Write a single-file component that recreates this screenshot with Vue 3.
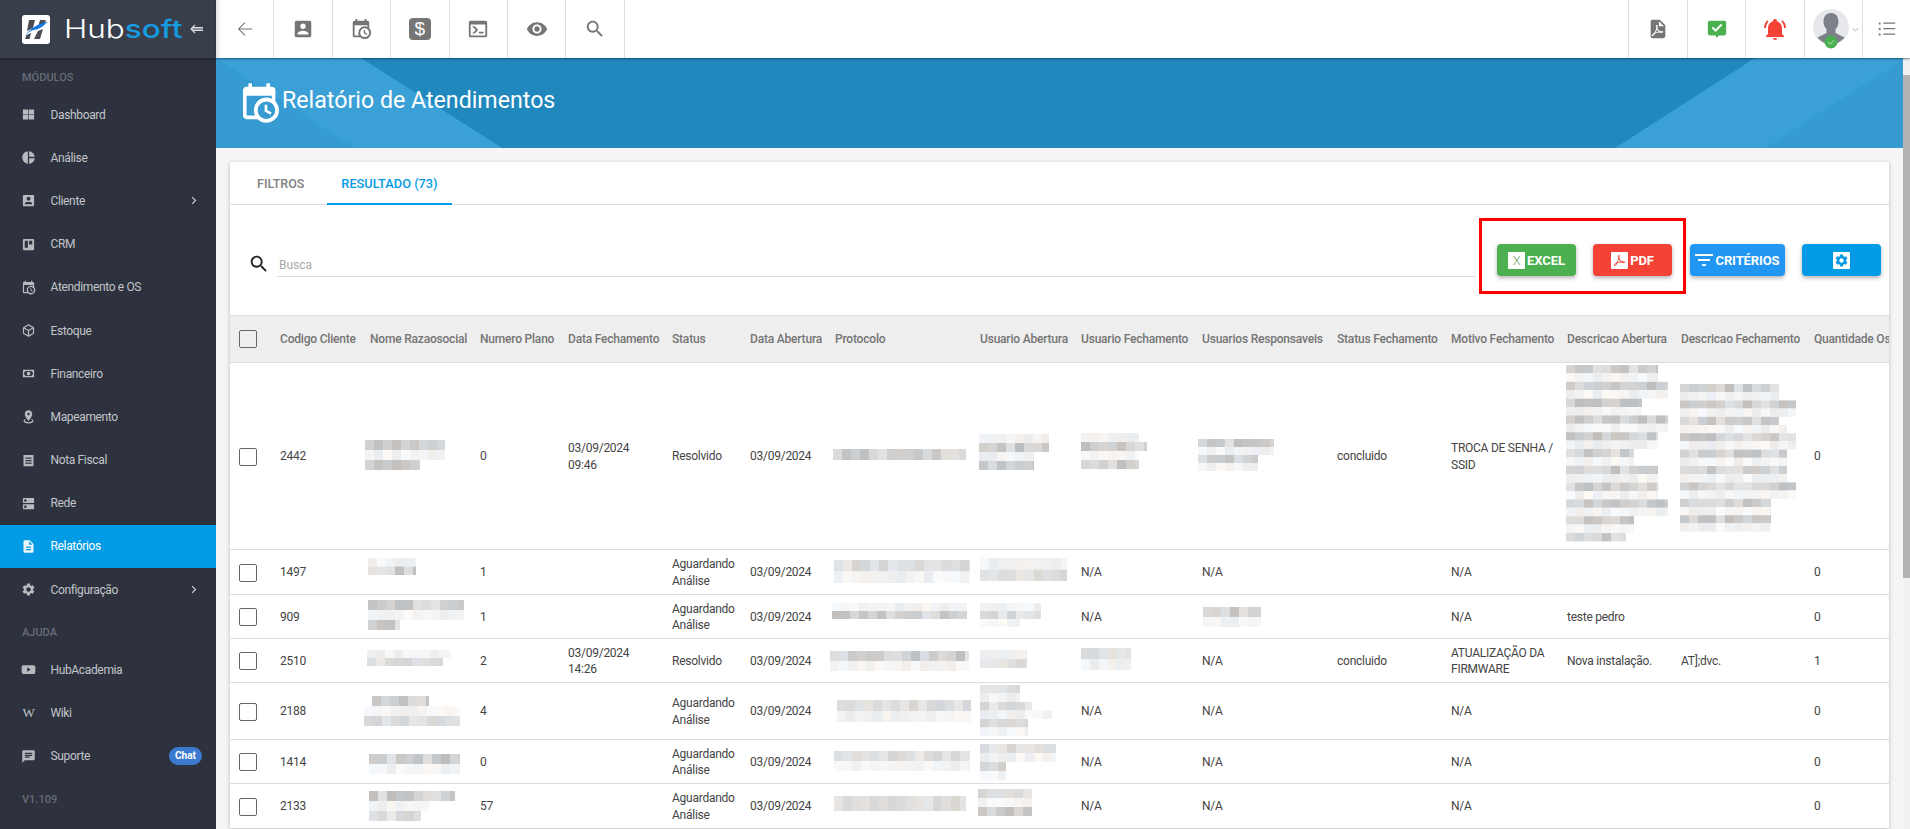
<script setup>
import { computed } from 'vue'

const icons = {
  quilt: 'M3 4h8.5v7.5H3zM12.5 4H21v7.5h-8.5zM3 12.5h8.5V20H3zM12.5 12.5H21V20h-8.5z',
  pie: 'M11 2v20c-5.07-.5-9-4.79-9-10s3.93-9.5 9-10zm2.03 0v8.99H22c-.47-4.74-4.24-8.52-8.97-8.99zm0 11.01V22c4.74-.47 8.5-4.25 8.97-8.99h-8.97z',
  person: 'M3 5v14c0 1.1.89 2 2 2h14c1.1 0 2-.9 2-2V5c0-1.1-.9-2-2-2H5c-1.11 0-2 .9-2 2zm12 4c0 1.66-1.34 3-3 3s-3-1.34-3-3 1.34-3 3-3 3 1.34 3 3zm-9 8c0-2 4-3.1 6-3.1s6 1.1 6 3.1v1H6v-1z',
  trello: 'M19 3H5a2 2 0 0 0-2 2v14a2 2 0 0 0 2 2h14a2 2 0 0 0 2-2V5a2 2 0 0 0-2-2zM11 17H6V6h5v11zm7-5h-5V6h5v6z',
  calendar: 'M15,13H16.5V15.82L18.94,17.23L18.19,18.53L15,16.69V13M19,8H5V19H9.67C9.24,18.09 9,17.07 9,16A7,7 0 0,1 16,9C17.07,9 18.09,9.24 19,9.67V8M5,21C3.89,21 3,20.1 3,19V5C3,3.89 3.89,3 5,3H6V1H8V3H16V1H18V3H19A2,2 0 0,1 21,5V11.1C22.24,12.36 23,14.09 23,16A7,7 0 0,1 16,23C14.09,23 12.36,22.24 11.1,21H5M16,11.15A4.85,4.85 0 0,0 11.15,16C11.15,18.68 13.32,20.85 16,20.85A4.85,4.85 0 0,0 20.85,16C20.85,13.32 18.68,11.15 16,11.15Z',
  cube: 'M21,16.5C21,16.88 20.79,17.21 20.47,17.38L12.57,21.82C12.41,21.94 12.21,22 12,22C11.79,22 11.59,21.94 11.43,21.82L3.53,17.38C3.21,17.21 3,16.88 3,16.5V7.5C3,7.12 3.21,6.79 3.53,6.62L11.43,2.18C11.59,2.06 11.79,2 12,2C12.21,2 12.41,2.06 12.57,2.18L20.47,6.62C20.79,6.79 21,7.12 21,7.5V16.5M12,4.15L6.04,7.5L12,10.85L17.96,7.5L12,4.15M5,15.91L11,19.29V12.58L5,9.21V15.91M19,15.91V9.21L13,12.58V19.29L19,15.91Z',
  cash: 'M3,6H21V18H3V6M12,9A3,3 0 0,1 15,12A3,3 0 0,1 12,15A3,3 0 0,1 9,12A3,3 0 0,1 12,9M7,8A2,2 0 0,1 5,10V14A2,2 0 0,1 7,16H17A2,2 0 0,1 19,14V10A2,2 0 0,1 17,8H7Z',
  marker: 'M12,2C15.31,2 18,4.66 18,7.95C18,12.41 12,19 12,19C12,19 6,12.41 6,7.95C6,4.66 8.69,2 12,2M12,6A2,2 0 0,0 10,8A2,2 0 0,0 12,10A2,2 0 0,0 14,8A2,2 0 0,0 12,6M20,19C20,21.21 16.42,23 12,23C7.58,23 4,21.21 4,19C4,17.71 5.22,16.56 7.11,15.83L7.75,16.74C6.67,17.19 6,17.81 6,18.5C6,19.88 8.69,21 12,21C15.31,21 18,19.88 18,18.5C18,17.81 17.33,17.19 16.25,16.74L16.89,15.83C18.78,16.56 20,17.71 20,19Z',
  receipt: 'M4 3h16v18H4zM7 7v2h10V7zM7 11v2h10v-2zM7 15v2h10v-2z',
  dns: 'M20 13H4c-.55 0-1 .45-1 1v6c0 .55.45 1 1 1h16c.55 0 1-.45 1-1v-6c0-.55-.45-1-1-1zM7 19c-1.1 0-2-.9-2-2s.9-2 2-2 2 .9 2 2-.9 2-2 2zM20 3H4c-.55 0-1 .45-1 1v6c0 .55.45 1 1 1h16c.55 0 1-.45 1-1V4c0-.55-.45-1-1-1zM7 9c-1.1 0-2-.9-2-2s.9-2 2-2 2 .9 2 2-.9 2-2 2z',
  doc: 'M14 2H6c-1.1 0-1.99.9-1.99 2L4 20c0 1.1.89 2 1.99 2H18c1.1 0 2-.9 2-2V8l-6-6zm2 16H8v-2h8v2zm0-4H8v-2h8v2zm-3-5V3.5L18.5 9H13z',
  gear: 'M19.14 12.94c.04-.3.06-.61.06-.94 0-.32-.02-.64-.07-.94l2.03-1.58c.18-.14.23-.41.12-.61l-1.92-3.32c-.12-.22-.37-.29-.59-.22l-2.39.96c-.5-.38-1.03-.7-1.62-.94l-.36-2.54c-.04-.24-.24-.41-.48-.41h-3.84c-.24 0-.43.17-.47.41l-.36 2.54c-.59.24-1.13.57-1.62.94l-2.39-.96c-.22-.08-.47 0-.59.22L2.74 8.87c-.12.21-.08.47.12.61l2.03 1.58c-.05.3-.09.63-.09.94s.02.64.07.94l-2.03 1.58c-.18.14-.23.41-.12.61l1.92 3.32c.12.22.37.29.59.22l2.39-.96c.5.38 1.03.7 1.62.94l.36 2.54c.05.24.24.41.48.41h3.84c.24 0 .44-.17.47-.41l.36-2.54c.59-.24 1.13-.56 1.62-.94l2.39.96c.22.08.47 0 .59-.22l1.92-3.32c.12-.22.07-.47-.12-.61l-2.01-1.58zM12 15.6c-1.98 0-3.6-1.62-3.6-3.6s1.62-3.6 3.6-3.6 3.6 1.62 3.6 3.6-1.62 3.6-3.6 3.6z',
  video: 'M4 5h16a3 3 0 0 1 3 3v8a3 3 0 0 1-3 3H4a3 3 0 0 1-3-3V8a3 3 0 0 1 3-3zM10 8.5v7l5.5-3.5z',
  chat: 'M20 2H4c-1.1 0-1.99.9-1.99 2L2 22l4-4h14c1.1 0 2-.9 2-2V4c0-1.1-.9-2-2-2zM6 9h12v2H6V9zm8 5H6v-2h8v2zm4-6H6V6h12v2z',
  back: 'M20 11.4H6.4l5.9-5.9-.8-.8L4.3 12l7.2 7.3.8-.8-5.9-5.9H20z',
  eye: 'M12 4.5C7 4.5 2.73 7.61 1 12c1.73 4.39 6 7.5 11 7.5s9.27-3.11 11-7.5c-1.73-4.39-6-7.5-11-7.5zM12 17c-2.76 0-5-2.24-5-5s2.24-5 5-5 5 2.24 5 5-2.24 5-5 5zm0-8c-1.66 0-3 1.34-3 3s1.34 3 3 3 3-1.34 3-3-1.34-3-3-3z',
  search: 'M15.5 14h-.79l-.28-.27C15.41 12.59 16 11.11 16 9.5 16 5.91 13.09 3 9.5 3S3 5.91 3 9.5 5.91 16 9.5 16c1.61 0 3.09-.59 4.23-1.57l.27.28v.79l5 4.99L20.49 19l-4.99-5zm-6 0C7.01 14 5 11.99 5 9.5S7.01 5 9.5 5 14 7.01 14 9.5 11.99 14 9.5 14z',
  console: 'M20,19V7H4V19H20M20,3A2,2 0 0,1 22,5V19A2,2 0 0,1 20,21H4A2,2 0 0,1 2,19V5C2,3.89 2.9,3 4,3H20M13,17V15H18V17H13M9.58,13L5.57,9H8.4L11.7,12.3C12.09,12.69 12.09,13.33 11.7,13.72L8.42,17H5.59L9.58,13Z',
  pdfFile: 'M13,9H18.5L13,3.5V9M6,2H14L20,8V20A2,2 0 0,1 18,22H6C4.89,22 4,21.1 4,20V4C4,2.89 4.89,2 6,2M10.1,11.4C10.08,11.44 9.81,13.16 8,16.09C8,16.09 4.5,17.91 5.33,19.27C6,20.35 7.65,19.23 9.07,16.59C9.07,16.59 10.89,15.95 13.31,15.77C13.31,15.77 17.17,17.5 17.7,15.66C18.22,13.8 14.64,14.22 14,14.41C14,14.41 12,13.06 11.5,11.2C11.5,11.2 12.64,7.25 10.89,7.3C9.14,7.35 9.8,10.43 10.1,11.4M10.91,12.44C10.94,12.45 11.38,13.65 12.8,14.9C12.8,14.9 10.47,15.36 9.41,15.8C9.41,15.8 10.41,14.07 10.91,12.44M14.84,15.16C15.42,15 17.17,15.31 17.1,15.64C17.04,15.97 14.84,15.16 14.84,15.16M7.77,17C7.24,18.24 6.33,19 6.1,19C5.87,19 6.8,17.4 7.77,17M10.91,8C10.91,7.93 11.27,8 11.27,9.39C11.27,9.6 11.04,10.5 10.91,10.94C10.91,10.94 10.5,8.72 10.91,8Z',
  pdfMark: 'M10.1,11.4C10.08,11.44 9.81,13.16 8,16.09C8,16.09 4.5,17.91 5.33,19.27C6,20.35 7.65,19.23 9.07,16.59C9.07,16.59 10.89,15.95 13.31,15.77C13.31,15.77 17.17,17.5 17.7,15.66C18.22,13.8 14.64,14.22 14,14.41C14,14.41 12,13.06 11.5,11.2C11.5,11.2 12.64,7.25 10.89,7.3C9.14,7.35 9.8,10.43 10.1,11.4M10.91,12.44C10.94,12.45 11.38,13.65 12.8,14.9C12.8,14.9 10.47,15.36 9.41,15.8C9.41,15.8 10.41,14.07 10.91,12.44M14.84,15.16C15.42,15 17.17,15.31 17.1,15.64C17.04,15.97 14.84,15.16 14.84,15.16M7.77,17C7.24,18.24 6.33,19 6.1,19C5.87,19 6.8,17.4 7.77,17M10.91,8C10.91,7.93 11.27,8 11.27,9.39C11.27,9.6 11.04,10.5 10.91,10.94C10.91,10.94 10.5,8.72 10.91,8Z',
  bell: 'M21,19V20H3V19L5,17V11C5,7.9 7.03,5.17 10,4.29C10,4.19 10,4.1 10,4A2,2 0 0,1 12,2A2,2 0 0,1 14,4C14,4.1 14,4.19 14,4.29C16.97,5.17 19,7.9 19,11V17L21,19M14,21A2,2 0 0,1 12,23A2,2 0 0,1 10,21M19.75,3.19L18.33,4.61C20.04,6.3 21,8.6 21,11H23C23,8.07 21.84,5.25 19.75,3.19M1,11H3C3,8.6 3.96,6.3 5.67,4.61L4.25,3.19C2.16,5.25 1,8.07 1,11Z',
  filter: 'M10 18h4v-2h-4v2zM3 6v2h18V6H3zm3 7h12v-2H6v2z',
  bubble: 'M4 3h16a2 2 0 0 1 2 2v12a2 2 0 0 1-2 2h-6l-3 3v-3H4a2 2 0 0 1-2-2V5a2 2 0 0 1 2-2zM10.4 15.2l7.4-7.4-1.5-1.4-5.9 5.9-2.8-2.8-1.4 1.4z',
  list: 'M3 5h2v2H3zM8 5h13v1.4H8zM3 11h2v2H3zM8 11h13v1.4H8zM3 17h2v2H3zM8 17h13v1.4H8z'
}

const mainMenu = [
  { label: 'Dashboard', icon: 'quilt' },
  { label: 'Análise', icon: 'pie' },
  { label: 'Cliente', icon: 'person', arrow: true },
  { label: 'CRM', icon: 'trello' },
  { label: 'Atendimento e OS', icon: 'calendar' },
  { label: 'Estoque', icon: 'cube' },
  { label: 'Financeiro', icon: 'cash' },
  { label: 'Mapeamento', icon: 'marker' },
  { label: 'Nota Fiscal', icon: 'receipt' },
  { label: 'Rede', icon: 'dns' },
  { label: 'Relatórios', icon: 'doc', active: true },
  { label: 'Configuração', icon: 'gear', arrow: true }
]

const helpMenu = [
  { label: 'HubAcademia', icon: 'video' },
  { label: 'Wiki', letter: 'W' },
  { label: 'Suporte', icon: 'chat', chat: true }
]

const columns = [
  { title: '', w: 50 },
  { title: 'Codigo Cliente', key: 'code', w: 90 },
  { title: 'Nome Razaosocial', key: 'name', w: 110 },
  { title: 'Numero Plano', key: 'plan', w: 88 },
  { title: 'Data Fechamento', key: 'closed', w: 104 },
  { title: 'Status', key: 'status', w: 78 },
  { title: 'Data Abertura', key: 'opened', w: 85 },
  { title: 'Protocolo', key: 'proto', w: 145 },
  { title: 'Usuario Abertura', key: 'uo', w: 101 },
  { title: 'Usuario Fechamento', key: 'uc', w: 121 },
  { title: 'Usuarios Responsaveis', key: 'ur', w: 135 },
  { title: 'Status Fechamento', key: 'sc', w: 114 },
  { title: 'Motivo Fechamento', key: 'reason', w: 116 },
  { title: 'Descricao Abertura', key: 'do', w: 114 },
  { title: 'Descricao Fechamento', key: 'dc', w: 133 },
  { title: 'Quantidade Os', key: 'qty', w: 120 }
]

const waiting = 'Aguardando Análise'
const day = '03/09/2024'

const rows = [
  { h: 187, code: 2442, plan: 0, closed: '03/09/2024 09:46', status: 'Resolvido', opened: day, sc: 'concluido', reason: 'TROCA DE SENHA / SSID', qty: 0 },
  { h: 45, code: 1497, plan: 1, status: waiting, opened: day, uc: 'N/A', ur: 'N/A', reason: 'N/A', qty: 0 },
  { h: 44, code: 909, plan: 1, status: waiting, opened: day, uc: 'N/A', reason: 'N/A', do: 'teste pedro', qty: 0 },
  { h: 44, code: 2510, plan: 2, closed: '03/09/2024 14:26', status: 'Resolvido', opened: day, ur: 'N/A', sc: 'concluido', reason: 'ATUALIZAÇÃO DA FIRMWARE', do: 'Nova instalação.', dc: 'AT];dvc.', qty: 1 },
  { h: 57, code: 2188, plan: 4, status: waiting, opened: day, uc: 'N/A', ur: 'N/A', reason: 'N/A', qty: 0 },
  { h: 44, code: 1414, plan: 0, status: waiting, opened: day, uc: 'N/A', ur: 'N/A', reason: 'N/A', qty: 0 },
  { h: 45, code: 2133, plan: 57, status: waiting, opened: day, uc: 'N/A', ur: 'N/A', reason: 'N/A', qty: 0 }
]

// blurred patches from the original print, in page coordinates: x, y, line height, "width+tone" per line
const patches = [
  [365, 441, 10, '80d 80l 55d'],
  [833, 450, 11, '133d'],
  [979, 435, 9, '70l 70d 55l 55d'],
  [1081, 434, 9, '58l 66d 58l 58d'],
  [1198, 440, 8, '76d 76l 60d 60l'],
  [1566, 366, 8.4, '92d 92l 102d 102l 76d 76l 102d 102l 92d 92l 68d 68l 92d 92l 92d 92l 102d 102l 68d 68l 60d'],
  [1680, 385, 8.2, '99d 99l 116d 116l 99d 107l 116d 116l 107d 107l 107d 107l 116d 116l 91d 91l 91d 91l'],
  [368, 559, 8.5, '48l 48d'],
  [834, 561, 11.5, '136m 136l'],
  [980, 559, 11.5, '87l 87m'],
  [368, 601, 10, '96d 96l 32d'],
  [832, 604, 8, '135l 135d'],
  [980, 604, 8, '61l 61m 40l'],
  [1203, 608, 10, '58d 58l'],
  [367, 651, 8, '84l 76m'],
  [830, 652, 10, '139d 139l'],
  [980, 651, 9, '47l 47m'],
  [1081, 649, 11, '50m 50l'],
  [372, 697, 10, '57d'],
  [364, 707, 10, '96l 96m'],
  [837, 701, 11, '134m 134l'],
  [980, 686, 8.5, '40m 40l 52m 72l 48m 48l'],
  [369, 755, 10, '91d 91l'],
  [834, 752, 10, '136m 136l'],
  [980, 745, 9, '76m 76l 26d 26l'],
  [369, 792, 10, '86d 60l 52m'],
  [834, 797, 15, '132m'],
  [978, 790, 9, '54m 54l 54d']
]

const toneRange = { d: [190, 228], m: [212, 234], l: [236, 250] }

const patchCells = computed(() => {
  let seed = 7
  const next = () => {
    seed = (seed * 9301 + 49297) % 233280
    return seed / 233280
  }
  const cells = []
  for (const [x, y, h, spec] of patches) {
    spec.split(' ').forEach((part, line) => {
      const width = parseFloat(part)
      const [lo, hi] = toneRange[part.slice(-1)]
      for (let cx = 0; cx < width; cx += 9) {
        const g = Math.round(lo + next() * (hi - lo))
        const tint = Math.round(next() * 8) - 4
        cells.push({
          x: x + cx,
          y: y + line * h,
          w: Math.min(9, width - cx),
          h,
          fill: `rgb(${g + tint},${g},${g - tint})`
        })
      }
    })
  }
  return cells
})
</script>

<template>
  <div class="app">
    <aside class="sidebar">
      <div class="brand">
        <svg class="logo" viewBox="0 0 28 29">
          <rect width="28" height="29" rx="3" fill="#fff" />
          <path fill="#4a4d55" d="M7 5h6l-2 8-6 3zM18 5h6l-2 4-6 3zM16 16l5-2-3 10h-6zM4.5 20l4.500-2-1.500 6H3z" />
          <path fill="#1478e0" d="M3 21C8 13 16 9 26 6.500 22 10 19 14 12 15c-3 .5-6 2-9 6z" />
        </svg>
        <span class="wordmark">Hub<span>soft</span></span>
        <svg class="collapse" viewBox="0 0 14 10"><path d="M5 1 1 5l4 4M2 3.500h11M1.500 5H13M2 6.500h11" fill="none" stroke="#dcdde0" stroke-width="1.100" /></svg>
      </div>
      <div class="section-label first">MÓDULOS</div>
      <a v-for="item in mainMenu" :key="item.label" class="nav-item" :class="{ active: item.active }">
        <svg class="nav-icon" viewBox="0 0 24 24"><path :d="icons[item.icon]" /></svg>
        <span class="nav-label">{{ item.label }}</span>
        <svg v-if="item.arrow" class="nav-arrow" viewBox="0 0 8 12"><path d="M1.500 1.500 6 6l-4.500 4.500" fill="none" stroke="currentColor" stroke-width="1.700" /></svg>
      </a>
      <div class="section-label">AJUDA</div>
      <a v-for="item in helpMenu" :key="item.label" class="nav-item">
        <span v-if="item.letter" class="nav-letter">{{ item.letter }}</span>
        <svg v-else class="nav-icon" viewBox="0 0 24 24"><path :d="icons[item.icon]" /></svg>
        <span class="nav-label">{{ item.label }}</span>
        <span v-if="item.chat" class="chat-pill">Chat</span>
      </a>
      <div class="section-label">V1.109</div>
    </aside>

    <div class="main">
      <header class="topbar">
        <button class="top-btn"><svg class="top-icon" viewBox="0 0 24 24"><path :d="icons.back" /></svg></button>
        <button class="top-btn"><svg class="top-icon" viewBox="0 0 24 24"><path :d="icons.person" /></svg></button>
        <button class="top-btn"><svg class="top-icon" viewBox="0 0 24 24"><path :d="icons.calendar" /></svg></button>
        <button class="top-btn"><span class="dollar">$</span></button>
        <button class="top-btn"><svg class="top-icon" viewBox="0 0 24 24"><path :d="icons.console" /></svg></button>
        <button class="top-btn"><svg class="top-icon" viewBox="0 0 24 24"><path :d="icons.eye" /></svg></button>
        <button class="top-btn last"><svg class="top-icon" viewBox="0 0 24 24"><path :d="icons.search" /></svg></button>
        <div class="top-space"></div>
        <button class="top-btn side"><svg class="top-icon" viewBox="0 0 24 24"><path :d="icons.pdfFile" /></svg></button>
        <button class="top-btn side"><svg class="top-icon green" viewBox="0 0 24 24"><path :d="icons.bubble" /></svg></button>
        <button class="top-btn side"><svg class="top-icon red" viewBox="0 0 24 24"><path :d="icons.bell" /></svg></button>
        <button class="top-btn side user">
          <svg class="avatar" viewBox="0 0 38 40">
            <circle cx="18" cy="18" r="18" fill="#e7e8eb" />
            <path fill="#7b8089" d="M18 4c5 0 7.500 4 7.500 8.500 0 3-1 5.500-3 7.500v4l9 4.500C28 32.500 23 35.500 18 35.500S8 32.500 4.500 28.500l9-4.500v-4c-2-2-3-4.500-3-7.500C10.500 8 13 4 18 4z" />
            <circle cx="18" cy="33" r="6.500" fill="#4caf50" />
            <path d="m15 33 2.200 2.200 4-4" fill="none" stroke="#8ed492" stroke-width="1.200" />
          </svg>
          <svg class="caret" viewBox="0 0 10 6"><path d="m1 1 4 4 4-4" fill="none" stroke="#888" stroke-width="1" /></svg>
        </button>
        <button class="top-btn menu"><svg class="top-icon" viewBox="0 0 24 24"><path :d="icons.list" /></svg></button>
      </header>

      <div class="page">
        <div class="content">
          <section class="banner">
            <svg class="banner-bg" viewBox="0 0 1687 90" preserveAspectRatio="none">
              <polygon points="0,0 145,0 286,90 0,90" fill="#3aa0d6" />
              <polygon points="0,0 139,90 0,90" fill="#359bd1" />
              <polygon points="1539,0 1687,0 1687,90 1399,90" fill="#3aa0d6" />
              <polygon points="1687,2 1549,90 1687,90" fill="#359bd1" />
            </svg>
            <svg class="banner-icon" viewBox="3 1 20 22"><path :d="icons.calendar" /></svg>
            <h1>Relatório de Atendimentos</h1>
          </section>

          <section class="card">
            <nav class="tabs">
              <a class="tab">FILTROS</a>
              <a class="tab active">RESULTADO (73)</a>
            </nav>
            <div class="card-body">
              <div class="toolbar">
                <svg class="search-icon" viewBox="0 0 24 24"><path :d="icons.search" /></svg>
                <input class="search-input" placeholder="Busca" />
                <button class="action excel"><span class="chip x">X</span>EXCEL</button>
                <button class="action pdf">
                  <span class="chip"><svg viewBox="3 5 17 17"><path :d="icons.pdfMark" /></svg></span>PDF
                </button>
                <button class="action criteria"><svg class="filter-icon" viewBox="3 5 18 14"><path :d="icons.filter" /></svg>CRITÉRIOS</button>
                <button class="action config">
                  <span class="chip"><svg viewBox="0 0 24 24"><path :d="icons.gear" /></svg></span>
                </button>
                <div class="highlight"></div>
              </div>
              <div class="table-wrap">
                <table class="report">
                  <colgroup>
                    <col v-for="col in columns" :key="col.title" :style="{ width: col.w + 'px' }" />
                  </colgroup>
                  <thead>
                    <tr>
                      <th v-for="col in columns" :key="col.title">
                        <span v-if="!col.key" class="check"></span>
                        <template v-else>{{ col.title }}</template>
                      </th>
                    </tr>
                  </thead>
                  <tbody>
                    <tr v-for="row in rows" :key="row.code" :style="{ height: row.h + 'px' }">
                      <td v-for="col in columns" :key="col.title">
                        <span v-if="!col.key" class="check"></span>
                        <template v-else>{{ row[col.key] }}</template>
                      </td>
                    </tr>
                  </tbody>
                </table>
                <svg class="patches" viewBox="230 316 1659 513">
                  <rect v-for="(c, i) in patchCells" :key="i" :x="c.x" :y="c.y" :width="c.w" :height="c.h" :fill="c.fill" />
                </svg>
              </div>
            </div>
          </section>
        </div>
        <div class="scrollbar"><div class="scroll-up"></div><div class="scroll-thumb"></div></div>
      </div>
    </div>
  </div>
</template>

<style>
html,
body {
  margin: 0;
  height: 100%;
  overflow: hidden;
}
</style>

<style scoped>
.app {
  display: flex;
  width: 1910px;
  height: 829px;
  overflow: hidden;
  font-family: Roboto, "Liberation Sans", sans-serif;
  color: #333;
  background: #f5f5f5;
}

.sidebar {
  width: 216px;
  flex: none;
  background: #2d323e;
  color: #c3c5ca;
  font-size: 12px;
  letter-spacing: -.35px;
}

.brand {
  height: 58px;
  display: flex;
  align-items: center;
  padding-left: 22px;
  background: #393e4b;
  box-shadow: 0 1px 3px rgba(0, 0, 0, .35);
  box-sizing: border-box;
  letter-spacing: 0;
}

.logo {
  width: 28px;
  height: 29px;
  flex: none;
}

.wordmark {
  margin-left: 14px;
  width: 117px;
  flex: none;
  font-family: Inter, sans-serif;
  font-size: 25px;
  font-weight: 300;
  color: #fff;
  line-height: 1;
  white-space: nowrap;
  transform-origin: left center;
  transform: scaleX(1.26);
}

.wordmark span {
  color: #169ae0;
  font-weight: 500;
}

.collapse {
  width: 14px;
  height: 10px;
  margin-left: 9px;
  flex: none;
}

.section-label {
  padding: 15px 0 8px 22px;
  font-size: 11px;
  line-height: 14px;
  font-weight: 500;
  letter-spacing: 0;
  color: #686c78;
}

.section-label.first {
  padding-top: 13px;
}

.nav-item {
  height: 43.200px;
  display: flex;
  align-items: center;
  padding: 0 14px 0 21px;
}

.nav-item.active {
  background: #039be5;
  color: #fff;
}

.nav-icon {
  width: 15px;
  height: 15px;
  fill: currentColor;
  fill-rule: evenodd;
  flex: none;
  opacity: .92;
}

.nav-letter {
  width: 15px;
  flex: none;
  text-align: center;
  font-family: "Liberation Serif", serif;
  font-size: 13px;
}

.nav-label {
  margin-left: 14.500px;
  flex: 1;
}

.nav-arrow {
  width: 6px;
  height: 9px;
  margin-right: 5px;
}

.chat-pill {
  width: 33px;
  height: 18px;
  line-height: 18px;
  border-radius: 9px;
  background: #3a7bd0;
  color: #fff;
  text-align: center;
  font-size: 10px;
  font-weight: 700;
  letter-spacing: 0;
}

.main {
  flex: 1;
  min-width: 0;
  display: flex;
  flex-direction: column;
}

.topbar {
  height: 58px;
  flex: none;
  display: flex;
  background: #fff;
  position: relative;
  z-index: 2;
  box-shadow: 0 1px 2px rgba(0, 40, 70, .6), inset 6px 0 5px -5px rgba(0, 0, 0, .2);
}

.top-btn {
  width: 58.400px;
  flex: none;
  padding: 0;
  display: flex;
  align-items: center;
  justify-content: center;
  border: 0;
  border-right: 1px solid #ddd;
  background: none;
}

.top-btn.side {
  border-left: 0;
}

.top-btn.menu {
  width: 47px;
  border-right: 0;
}

.top-space {
  flex: 1;
  border-right: 1px solid #ddd;
}

.top-icon {
  width: 22px;
  height: 22px;
  fill: #757575;
  fill-rule: evenodd;
}

.top-icon.green {
  fill: #4caf50;
}

.top-icon.red {
  width: 24px;
  height: 24px;
  fill: #f44336;
}

.dollar {
  width: 22px;
  height: 22px;
  border-radius: 4px;
  background: #757575;
  color: #fff;
  font-size: 19px;
  font-weight: 300;
  line-height: 22px;
}

.user {
  justify-content: flex-start;
  padding-left: 8px;
}

.avatar {
  width: 38px;
  height: 40px;
}

.caret {
  width: 7px;
  height: 5px;
  margin-left: 1px;
}

.page {
  flex: 1;
  display: flex;
  min-height: 0;
}

.content {
  flex: 1;
  min-width: 0;
}

.scrollbar {
  width: 7px;
  flex: none;
  background: #f1f1f1;
}

.scroll-up {
  height: 17px;
}

.scroll-thumb {
  height: 503px;
  background: #b4b4b4;
}

.banner {
  height: 90px;
  display: flex;
  align-items: center;
  padding-left: 27px;
  position: relative;
  background: #2088bd;
  color: #fff;
}

.banner-bg {
  position: absolute;
  inset: 0;
  width: 100%;
  height: 100%;
}

.banner-icon {
  position: relative;
  width: 36px;
  height: 40px;
  fill: #fff;
  fill-rule: evenodd;
}

.banner h1 {
  position: relative;
  margin: 0 0 6px 3px;
  font-size: 23.200px;
  font-weight: 400;
  color: #fff;
}

.card {
  margin: 14px 14px 0;
  background: #fff;
  box-shadow: 0 1px 4px rgba(0, 0, 0, .25);
}

.tabs {
  height: 42px;
  display: flex;
  padding-left: 13px;
  border-bottom: 1px solid #ddd;
  box-sizing: content-box;
}

.tab {
  padding: 0 14px;
  line-height: 43px;
  font-size: 12.500px;
  font-weight: 500;
  color: #808080;
  margin-right: 9px;
}

.tab.active {
  color: #039be5;
  border-bottom: 2px solid #039be5;
  height: 41px;
  font-size: 12.800px;
}

.toolbar {
  height: 110px;
  box-sizing: border-box;
  padding: 39px 8px 0 18px;
  display: flex;
  align-items: flex-start;
  position: relative;
}

.search-icon {
  width: 22px;
  height: 22px;
  margin: 9px 7px 0 0;
  fill: #222;
  flex: none;
  fill-rule: evenodd;
}

.search-input {
  flex: 1;
  min-width: 0;
  height: 33px;
  box-sizing: border-box;
  padding: 10px 2px 0;
  border: 0;
  border-bottom: 1px solid #ddd;
  outline: 0;
  font: 12px Roboto, sans-serif;
}

.search-input::placeholder {
  color: #a9a9a9;
}

.action {
  height: 32px;
  width: 79px;
  padding: 0;
  border: 0;
  border-radius: 4px;
  display: flex;
  align-items: center;
  justify-content: center;
  gap: 2px;
  margin-left: 17px;
  color: #fff;
  font: 700 13px Roboto, sans-serif;
  letter-spacing: -.1px;
  box-shadow: 0 2px 4px rgba(0, 0, 0, .3);
  white-space: nowrap;
}

.excel {
  background: #4caf50;
  margin-left: 22px;
}

.pdf {
  background: #f44336;
}

.criteria {
  background: #2196f3;
  width: 95px;
  margin-left: 18px;
}

.config {
  background: #039be5;
}

.chip {
  width: 17px;
  height: 17px;
  background: #fff;
  border-radius: 1px;
  display: flex;
  align-items: center;
  justify-content: center;
}

.chip.x {
  color: #6aa86b;
  font-size: 13px;
  font-weight: 300;
}

.pdf .chip svg {
  width: 15px;
  height: 15px;
  fill: #f44336;
  fill-rule: evenodd;
}

.config .chip svg {
  width: 15px;
  height: 15px;
  fill: #039be5;
  fill-rule: evenodd;
}

.filter-icon {
  width: 18px;
  height: 14px;
  fill: #fff;
  flex: none;
}

.highlight {
  position: absolute;
  top: 13px;
  right: 203px;
  width: 207px;
  height: 76px;
  box-sizing: border-box;
  border: 3px solid #f00;
}

.table-wrap {
  position: relative;
  overflow: hidden;
  height: 513px;
}

.report {
  table-layout: fixed;
  width: 1604px;
  border-collapse: collapse;
  font-size: 12px;
  letter-spacing: -.25px;
  line-height: 16.500px;
}

.report th {
  height: 46px;
  padding: 0 10px 0 0;
  background: #eee;
  border-top: 1px solid #ddd;
  border-bottom: 1px solid #ddd;
  text-align: left;
  font-weight: 500;
  letter-spacing: -.2px;
  color: #757575;
  white-space: nowrap;
}

.report td {
  padding: 1px 12px 0 0;
  border-bottom: 1px solid #ddd;
  color: #444;
}

.report th:first-child,
.report td:first-child {
  padding-left: 9px;
}

.check {
  display: block;
  width: 18px;
  height: 18px;
  box-sizing: border-box;
  border: 1px solid #666;
  border-radius: 2px;
}

.patches {
  position: absolute;
  left: 0;
  top: 0;
  width: 1659px;
  height: 513px;
  pointer-events: none;
}
</style>
